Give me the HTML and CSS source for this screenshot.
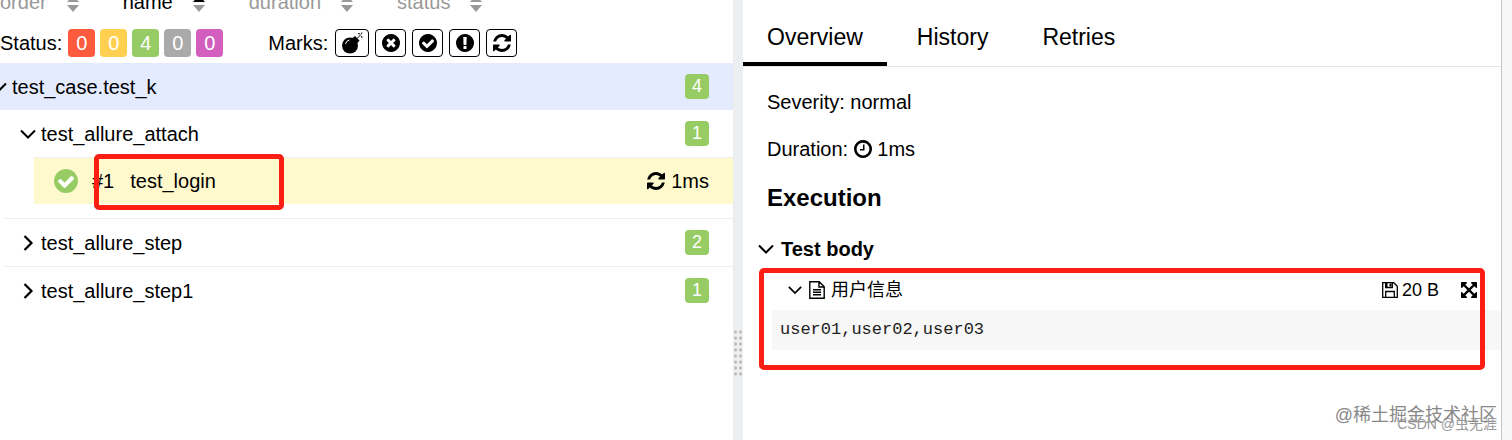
FILE: index.html
```html
<!DOCTYPE html>
<html lang="zh-CN">
<head>
    <meta charset="UTF-8">
    <meta name="viewport" content="width=device-width, initial-scale=1.0">
    <title>Allure Report</title>
    <link rel="stylesheet" href="styles.css">
</head>
<body>
    <!-- icons -->
    <svg class="sprite" aria-hidden="true">
        <symbol id="i-refresh" viewBox="128 128 1536 1536"><path d="M1639 1056q0 5-1 7-64 268-268 434.500t-478 166.500q-146 0-282.500-55t-243.500-157l-129 129q-19 19-45 19t-45-19-19-45v-448q0-26 19-45t45-19h448q26 0 45 19t19 45-19 45l-137 137q71 66 161 102t187 36q134 0 250-65t186-179q11-17 53-117 8-23 30-23h192q13 0 22.500 9.500t9.500 22.500zm25-800v448q0 26-19 45t-45 19h-448q-26 0-45-19t-19-45 19-45l138-138q-148-137-349-137-134 0-250 65t-186 179q-11 17-53 117-8 23-30 23h-199q-13 0-22.500-9.500t-9.500-22.500v-7q65-268 270-434.500t480-166.500q146 0 284 55.500t245 156.500l130-129q19-19 45-19t45 19 19 45z"/></symbol>
        <symbol id="i-times" viewBox="128 128 1536 1536"><path d="M1277 1122q0-26-19-45l-181-181 181-181q19-19 19-45 0-27-19-46l-90-90q-19-19-46-19-26 0-45 19l-181 181-181-181q-19-19-45-19-27 0-46 19l-90 90q-19 19-19 46 0 26 19 45l181 181-181 181q-19 19-19 45 0 27 19 46l90 90q19 19 46 19 26 0 45-19l181-181 181 181q19 19 45 19 27 0 46-19l90-90q19-19 19-46zm387-226q0 209-103 385.500t-279.500 279.500-385.500 103-385.500-103-279.500-279.500-103-385.500 103-385.500 279.500-279.500 385.500-103 385.500 103 279.500 279.500 103 385.500z"/></symbol>
        <symbol id="i-check" viewBox="128 128 1536 1536"><path d="M1412 734q0-28-18-46l-91-90q-19-19-45-19t-45 19l-408 407-226-226q-19-19-45-19t-45 19l-91 90q-18 18-18 46 0 27 18 45l362 362q19 19 45 19 27 0 46-19l543-543q18-18 18-45zm252 162q0 209-103 385.500t-279.500 279.500-385.500 103-385.500-103-279.500-279.500-103-385.500 103-385.500 279.500-279.500 385.500-103 385.500 103 279.500 279.500 103 385.500z"/></symbol>
        <symbol id="i-exclamation" viewBox="128 128 1536 1536"><path d="M896 128q209 0 385.500 103t279.500 279.500 103 385.500-103 385.500-279.500 279.500-385.500 103-385.500-103-279.500-279.500-103-385.500 103-385.500 279.500-279.500 385.500-103zm128 1247v-190q0-14-9-23.500t-22-9.500h-192q-13 0-23 10t-10 23v190q0 13 10 23t23 10h192q13 0 22-9.500t9-23.500zm-2-344l18-621q0-12-10-18-10-8-24-8h-220q-14 0-24 8-10 6-10 18l17 621q0 10 10 17.500t24 7.500h185q14 0 23.500-7.500t10.500-17.500z"/></symbol>
        <symbol id="i-clock" viewBox="128 128 1536 1536"><path d="M1024 544v448q0 14-9 23t-23 9h-320q-14 0-23-9t-9-23v-64q0-14 9-23t23-9h224v-352q0-14 9-23t23-9h64q14 0 23 9t9 23zm416 352q0-148-73-273t-198-198-273-73-273 73-198 198-73 273 73 273 198 198 273 73 273-73 198-198 73-273zm224 0q0 209-103 385.500t-279.500 279.500-385.500 103-385.500-103-279.500-279.500-103-385.500 103-385.500 279.500-279.500 385.500-103 385.500 103 279.500 279.500 103 385.500z"/></symbol>
        <symbol id="i-expand" viewBox="128 128 1536 1536"><path d="M1411 541l-355 355 355 355 144-144q29-31 70-14 39 17 39 59v448q0 26-19 45t-45 19h-448q-42 0-59-40-17-39 14-69l144-144-355-355-355 355 144 144q31 30 14 69-17 40-59 40h-448q-26 0-45-19t-19-45v-448q0-42 40-59 39-17 69 14l144 144 355-355-355-355-144 144q-19 19-45 19-12 0-24-5-40-17-40-59v-448q0-26 19-45t45-19h448q42 0 59 40 17 39-14 69l-144 144 355 355 355-355-144-144q-31-30-14-69 17-40 59-40h448q26 0 45 19t19 45v448q0 42-39 59-13 5-25 5-26 0-45-19z"/></symbol>
        <symbol id="i-bomb" viewBox="0 0 22 22"><circle cx="9" cy="13.500" r="8"/><path d="M11.500 6l2.500-2 4.500 4.500-2 2.500z"/><path d="M4.500 12a5 5 0 0 1 4-4" fill="none" stroke="#fff" stroke-width="1"/><path d="M16 6.500l4-4M17 1.500l2 .5M21 .500l-1 1.500M20.500 4l.5 2" fill="none" stroke="currentColor" stroke-width="1"/></symbol>
        <symbol id="i-save" viewBox="0 0 16 16"><path d="M.7.700h11l3.600 3.600v11H.7zM3.700 15V9.500h8.600V15M3.700 1v4.500h6.600V1" fill="none" stroke="currentColor" stroke-width="1.300"/><path d="M7.500 1.500h2v3h-2zM3.500 1h2v4h-2z"/></symbol>
        <symbol id="i-file" viewBox="0 0 16 18"><path d="M.8.800h9.400l5 5v11.400H.8zM10 1v5h5M4 8.700h8M4 11.200h8M4 13.700h8" fill="none" stroke="currentColor" stroke-width="1.400"/></symbol>
        <symbol id="i-down" viewBox="0 0 16 10"><path d="M1 1.500l7 7 7-7" fill="none" stroke="currentColor" stroke-width="2"/></symbol>
        <symbol id="i-right" viewBox="0 0 10 16"><path d="M1.500 1l7 7-7 7" fill="none" stroke="currentColor" stroke-width="2.200"/></symbol>
        <symbol id="i-sort" viewBox="0 0 14 18"><path class="sort-up" d="M1 7l6-7 6 7z"/><path class="sort-down" d="M1 10h12l-6 7z"/></symbol>
    </svg>

    <div class="layout">
        <div class="side">
            <div class="sorter">
                <a href="#order">order <svg class="sort"><use href="#i-sort"/></svg></a>
                <a href="#name" class="active">name <svg class="sort"><use href="#i-sort"/></svg></a>
                <a href="#duration">duration <svg class="sort"><use href="#i-sort"/></svg></a>
                <a href="#status">status <svg class="sort"><use href="#i-sort"/></svg></a>
            </div>

            <div class="filters">
                <span>Status:</span>
                <div class="statuses">
                    <button class="status failed">0</button>
                    <button class="status broken">0</button>
                    <button class="status passed">4</button>
                    <button class="status skipped">0</button>
                    <button class="status unknown">0</button>
                </div>
                <span>Marks:</span>
                <div class="marks">
                    <button class="mark bomb" aria-label="Flaky"><svg><use href="#i-bomb"/></svg></button>
                    <button class="mark" aria-label="New failed"><svg><use href="#i-times"/></svg></button>
                    <button class="mark" aria-label="New passed"><svg><use href="#i-check"/></svg></button>
                    <button class="mark" aria-label="New broken"><svg><use href="#i-exclamation"/></svg></button>
                    <button class="mark" aria-label="Retries"><svg><use href="#i-refresh"/></svg></button>
                </div>
            </div>

            <div class="tree">
                <a href="#k" class="node root">
                    <svg class="arrow"><use href="#i-down"/></svg>
                    <span class="node-name">test_case.test_k</span>
                    <span class="count">4</span>
                </a>
                <div class="children">
                    <div class="group open">
                        <a href="#attach" class="node">
                            <svg class="arrow"><use href="#i-down"/></svg>
                            <span class="node-name">test_allure_attach</span>
                            <span class="count">1</span>
                        </a>
                        <a href="#login" class="leaf">
                            <svg class="leaf-status"><use href="#i-check"/></svg>
                            <span class="leaf-order">#1</span>
                            <span class="node-name">test_login</span>
                            <svg class="icon"><use href="#i-refresh"/></svg>
                            <span>1ms</span>
                            <span class="frame leaf-frame"></span>
                        </a>
                    </div>
                    <div class="group">
                        <a href="#step" class="node">
                            <svg class="arrow"><use href="#i-right"/></svg>
                            <span class="node-name">test_allure_step</span>
                            <span class="count">2</span>
                        </a>
                    </div>
                    <div class="group">
                        <a href="#step1" class="node">
                            <svg class="arrow"><use href="#i-right"/></svg>
                            <span class="node-name">test_allure_step1</span>
                            <span class="count">1</span>
                        </a>
                    </div>
                </div>
            </div>
        </div>

        <div class="gutter"><div class="grip"></div></div>

        <div class="content">
            <div class="tabs">
                <a href="#overview" class="active">Overview</a>
                <a href="#history">History</a>
                <a href="#retries">Retries</a>
            </div>
            <div class="details">
                <div class="prop">Severity: normal</div>
                <div class="prop">Duration: <svg class="icon"><use href="#i-clock"/></svg> 1ms</div>
                <h2>Execution</h2>
                <h3><svg class="arrow"><use href="#i-down"/></svg>Test body</h3>
            </div>
            <div class="attachment">
                <div class="attachment-row">
                    <svg class="arrow"><use href="#i-down"/></svg>
                    <svg class="file"><use href="#i-file"/></svg>
                    <span class="attachment-name">用户信息</span>
                    <a href="#save" class="save"><svg><use href="#i-save"/></svg>20 B</a>
                    <button class="expand" aria-label="Full screen"><svg><use href="#i-expand"/></svg></button>
                </div>
                <pre>user01,user02,user03</pre>
                <div class="frame attachment-frame"></div>
            </div>
        </div>
        <div class="edge"></div>
    </div>

    <div class="watermark">@稀土掘金技术社区</div>
    <div class="watermark small">CSDN @虫无涯</div>
</body>
</html>
```
FILE: styles.css
```css
* {
    box-sizing: border-box;
}

body {
    margin: 0;
    font-family: "Liberation Sans", Arial, "Noto Sans CJK SC", sans-serif;
    font-size: 20px;
    line-height: 24px;
    color: #000;
    background-color: #fff;
}

a {
    color: inherit;
    text-decoration: none;
}

button {
    font: inherit;
    padding: 0;
    cursor: pointer;
}

svg {
    fill: currentColor;
    flex-shrink: 0;
}

.sprite {
    position: absolute;
    width: 0;
    height: 0;
}

.layout {
    display: flex;
    min-height: 100vh;
    overflow: hidden;
}

.side {
    flex: 733 1 0;
    min-width: 0;
}

/* sorter, scrolled half out of view */
.sorter {
    display: flex;
    gap: 43px;
    height: 24px;
    margin-top: -10px;
    color: #999;
}

.sorter a {
    display: flex;
    gap: 19px;
}

.sorter .active {
    color: #000;
}

.sort {
    width: 14px;
    height: 18px;
    margin-top: 5px;
}

.sort-down {
    fill: #999;
}

/* filters */
.filters {
    display: flex;
    align-items: center;
    height: 49px;
    padding-top: 8px;
}

.statuses {
    display: flex;
    gap: 5px;
    margin: 0 45px 0 6px;
}

.status {
    width: 27px;
    height: 28px;
    border: 0;
    border-radius: 4px;
    color: #fff;
}

.failed {
    background-color: #fd5a3e;
}

.broken {
    background-color: #ffd050;
}

.passed {
    background-color: #97cc64;
}

.skipped {
    background-color: #aaa;
}

.unknown {
    background-color: #d35ebe;
}

.marks {
    display: flex;
    gap: 6px;
    margin-left: 7px;
}

.mark {
    display: flex;
    align-items: center;
    justify-content: center;
    width: 31px;
    height: 28px;
    border: 1px solid #000;
    border-radius: 4px;
    background-color: #fff;
    color: #000;
}

.mark svg {
    width: 18px;
    height: 18px;
}

.mark.bomb {
    width: 34px;
}

.mark.bomb svg {
    width: 22px;
    height: 22px;
}

/* tree */
.node {
    display: flex;
    align-items: center;
    height: 47px;
    padding: 0 24px 0 16px;
}

.node-name {
    flex: 1;
}

.arrow {
    width: 16px;
    height: 10px;
    margin-right: 5px;
}

.group .arrow {
    height: 16px;
}

.root {
    background-color: #e4ebfe;
    padding-left: 0;
}

.root .arrow {
    margin-left: -9px;
}

.count {
    width: 24px;
    height: 25px;
    border-radius: 4px;
    background-color: #97cc64;
    color: #fff;
    font-size: 18px;
    line-height: 25px;
    text-align: center;
}

.children {
    margin-left: 4px;
}

.group + .group {
    border-top: 1px solid #eceff1;
}

.open {
    padding-bottom: 14px;
}

.leaf {
    position: relative;
    display: flex;
    align-items: center;
    height: 47px;
    margin-left: 30px;
    padding: 0 24px 0 20px;
    border-top: 1px solid #eceff1;
    background-color: #fffacd;
}

.leaf-status {
    width: 24px;
    height: 24px;
    color: #97cc64;
    background: radial-gradient(#fff 50%, transparent 55%);
}

.leaf-order {
    margin: 0 16px 0 14px;
}

.icon {
    width: 18px;
    height: 18px;
    margin-right: 6px;
}

.frame {
    position: absolute;
    border: 5px solid #fc1d13;
    border-radius: 5px;
}

.leaf-frame {
    top: -4px;
    left: 60px;
    width: 190px;
    height: 56px;
}

/* splitter */
.gutter {
    display: flex;
    flex: 0 0 10px;
    justify-content: center;
    background-color: #eceef0;
}

.grip {
    width: 10px;
    height: 48px;
    margin-top: 329px;
    background: radial-gradient(circle, #bbb 1px, transparent 2px);
    background-size: 5px 6px;
}

/* test result */
.content {
    flex: 758 1 0;
    min-width: 0;
}

.tabs {
    display: flex;
    gap: 6px;
    height: 67px;
    border-bottom: 1px solid #e5e5e5;
    font-size: 23px;
}

.tabs a {
    padding: 25px 24px 0;
    border-bottom: 4px solid transparent;
}

.tabs .active {
    border-bottom-color: #000;
}

.details {
    padding: 23px 24px 0;
}

.prop {
    display: flex;
    align-items: center;
    white-space: pre;
    margin-bottom: 23px;
}

.prop .icon {
    margin-right: 0;
}

h2 {
    margin: 0 0 25px;
    font-size: 24px;
    line-height: 28px;
}

h3 {
    display: flex;
    align-items: center;
    margin: 0 0 0 -9px;
    font-size: 20px;
}

h3 .arrow {
    margin-right: 7px;
}

.attachment {
    position: relative;
    margin: 9px 0 0 29px;
}

.attachment-row {
    display: flex;
    align-items: center;
    height: 40px;
    padding: 0 24px 0 16px;
    font-size: 18px;
}

.attachment .arrow {
    width: 14px;
    margin-right: 7px;
}

.file {
    width: 16px;
    height: 18px;
    margin-right: 6px;
}

.attachment-name {
    flex: 1;
}

.save {
    display: flex;
    align-items: center;
    gap: 4px;
    margin-right: 22px;
}

.save svg {
    width: 16px;
    height: 16px;
}

.expand {
    display: flex;
    border: 0;
    background: none;
    color: #000;
}

.expand svg {
    width: 16px;
    height: 16px;
}

pre {
    margin: 0;
    padding: 8px;
    background-color: #f7f7f7;
    color: #222;
    font-family: "Liberation Mono", monospace;
    font-size: 17px;
}

.attachment-frame {
    top: -2px;
    right: 16px;
    bottom: -20px;
    left: -13px;
}

.edge {
    flex: 0 0 11px;
    border-left: 1px solid #c4c4c4;
    background-color: #f7f7f7;
}

.watermark {
    position: absolute;
    right: 15px;
    bottom: 13px;
    font-size: 18px;
    color: #888;
}

.watermark.small {
    bottom: 4px;
    font-size: 14px;
    color: #999;
}
```
